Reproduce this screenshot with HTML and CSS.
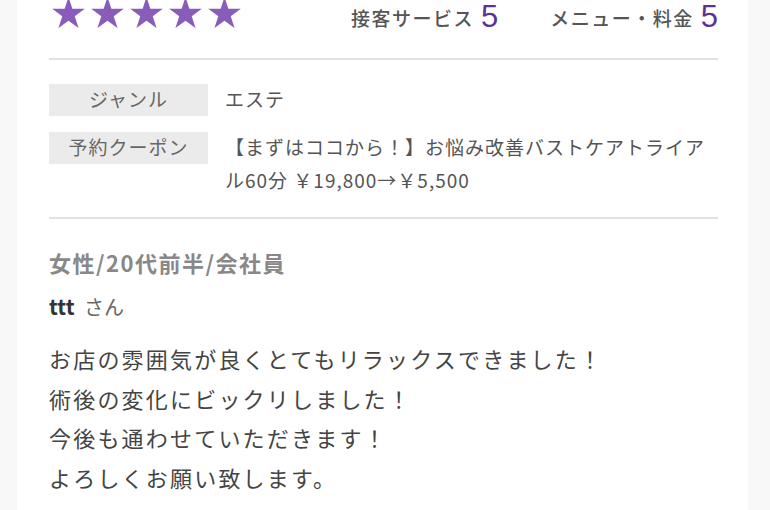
FILE: index.html
```html
<!DOCTYPE html>
<html lang="ja">
<head>
  <meta charset="UTF-8" />
  <title>口コミ</title>
  <meta name="viewport" content="width=device-width, initial-scale=1" />
  <link rel="stylesheet" href="styles.css">
</head>
<body>

  <main class="card">
    <div class="rating-row">
      <div class="stars">
        <svg viewBox="0 0 100 95"><polygon points="50,0 61.8,36.2 100,36.2 69.1,58.8 80.9,95.1 50,72.7 19.1,95.1 30.9,58.8 0,36.2 38.2,36.2"/></svg>
        <svg viewBox="0 0 100 95"><polygon points="50,0 61.8,36.2 100,36.2 69.1,58.8 80.9,95.1 50,72.7 19.1,95.1 30.9,58.8 0,36.2 38.2,36.2"/></svg>
        <svg viewBox="0 0 100 95"><polygon points="50,0 61.8,36.2 100,36.2 69.1,58.8 80.9,95.1 50,72.7 19.1,95.1 30.9,58.8 0,36.2 38.2,36.2"/></svg>
        <svg viewBox="0 0 100 95"><polygon points="50,0 61.8,36.2 100,36.2 69.1,58.8 80.9,95.1 50,72.7 19.1,95.1 30.9,58.8 0,36.2 38.2,36.2"/></svg>
        <svg viewBox="0 0 100 95"><polygon points="50,0 61.8,36.2 100,36.2 69.1,58.8 80.9,95.1 50,72.7 19.1,95.1 30.9,58.8 0,36.2 38.2,36.2"/></svg>
      </div>
      <div class="scores">
        <span class="score">接客サービス<b>5</b></span>
        <span class="score">メニュー・料金<b>5</b></span>
      </div>
    </div>

    <dl class="info">
      <div class="info-row">
        <dt>ジャンル</dt>
        <dd>エステ</dd>
      </div>
      <div class="info-row">
        <dt>予約クーポン</dt>
        <dd>【まずはココから！】お悩み改善バストケアトライアル60分 ￥19,800→￥5,500</dd>
      </div>
    </dl>

    <section class="review">
      <p class="profile">女性/20代前半/会社員</p>
      <p class="author"><strong>ttt</strong> さん</p>
      <p class="comment">
        お店の雰囲気が良くとてもリラックスできました！<br>
        術後の変化にビックリしました！<br>
        今後も通わせていただきます！<br>
        よろしくお願い致します。
      </p>
    </section>
  </main>

</body>
</html>
```

FILE: styles.css
```css
body {
  font-family: 'Noto Sans CJK JP', 'Noto Sans', sans-serif;
  background-color: #f8f8f8;
  margin: 0;
  color: #444;
}

.card {
  background: #fff;
  margin: 0 22px 0 17px;
  padding: 0 30px 20px 32px;
  min-height: 510px;
  box-sizing: border-box;
}

.rating-row {
  display: flex;
  align-items: flex-start;
  border-bottom: 2px solid #e2e2e2;
  height: 58px;
}

.stars {
  display: flex;
  gap: 6px;
  margin: -3px 0 0 3px;
}

.stars svg {
  width: 33px;
  height: 31px;
  fill: #8a5cba;
}

.scores {
  margin-left: auto;
  display: flex;
  gap: 52px;
  margin-top: 3px;
}

.score {
  font-size: 19px;
  font-weight: 500;
  color: #555;
  line-height: 28px;
  letter-spacing: 1.5px;
}

.score b {
  font-family: 'Liberation Sans', sans-serif;
  font-weight: 400;
  font-size: 31px;
  line-height: 28px;
  letter-spacing: 0;
  color: #5b3397;
  margin-left: 7px;
  vertical-align: -1px;
}

.info {
  margin: 0;
  padding: 24px 0 21px;
  border-bottom: 2px solid #e2e2e2;
  display: flex;
  flex-direction: column;
  gap: 16px;
}

.info-row {
  display: flex;
  gap: 17px;
}

.info dt {
  flex: 0 0 159px;
  height: 32px;
  line-height: 30px;
  background: #ebebeb;
  color: #666;
  text-align: center;
  font-size: 19px;
  letter-spacing: 1px;
}

.info dd {
  margin: -2px 0 0;
  font-size: 19px;
  line-height: 33px;
  color: #555;
  letter-spacing: 1px;
}

.review {
  padding-top: 28px;
}

.review p {
  margin: 0;
}

.profile {
  font-size: 22px;
  font-weight: 700;
  color: #888;
  line-height: 30px;
  letter-spacing: 1.5px;
}

.author {
  margin-top: 14px !important;
  font-size: 20px;
  color: #666;
  line-height: 30px;
}

.author strong {
  font-size: 21px;
  color: #333;
  margin-right: 5px;
}

.comment {
  margin-top: 17px !important;
  font-size: 22px;
  line-height: 39.5px;
  color: #444;
  letter-spacing: 2.2px;
}
```
